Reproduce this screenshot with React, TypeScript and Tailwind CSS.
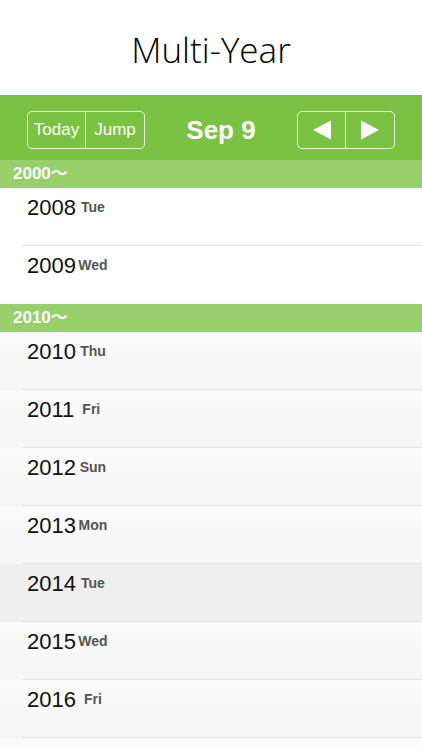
import React from "react";

type Row = { year: number; day: string; active?: boolean };

const sections: { label: string; rows: Row[]; tinted?: boolean }[] = [
  {
    label: "2000〜",
    rows: [
      { year: 2008, day: "Tue" },
      { year: 2009, day: "Wed" },
    ],
  },
  {
    label: "2010〜",
    tinted: true,
    rows: [
      { year: 2010, day: "Thu" },
      { year: 2011, day: "Fri" },
      { year: 2012, day: "Sun" },
      { year: 2013, day: "Mon" },
      { year: 2014, day: "Tue", active: true },
      { year: 2015, day: "Wed" },
      { year: 2016, day: "Fri" },
      { year: 2017, day: "Sat" },
    ],
  },
];

const sans = { fontFamily: '"Liberation Sans", Arial, "Noto Sans CJK JP", sans-serif' };

const YearRow = ({ row, last, tinted }: { row: Row; last: boolean; tinted?: boolean }) => {
  const bg = row.active
    ? "bg-[#efefef]"
    : tinted
    ? "bg-gradient-to-b from-[#fbfbfb] to-[#f6f6f6]"
    : "bg-white";
  return (
    <div className={`h-[58px] shrink-0 ${bg}`}>
      <div className={`ml-[22px] h-full ${last ? "" : "border-b border-[#e3e3e3]"}`}>
        <div className="flex items-start pl-[5px] pt-[7px]">
          <span className="text-[22px] leading-[26px] text-[#111]">{row.year}</span>
          <span className="ml-[2px] mt-[4px] w-[30px] text-center text-[14px] font-bold leading-[16px] text-[#555]">
            {row.day}
          </span>
        </div>
      </div>
    </div>
  );
};

const Triangle = ({ dir }: { dir: "left" | "right" }) => (
  <svg width="22" height="22" viewBox="0 0 22 22">
    {dir === "left" ? (
      <path d="M2 11 L20 1.5 L20 20.5 Z" fill="white" />
    ) : (
      <path d="M20 11 L2 1.5 L2 20.5 Z" fill="white" />
    )}
  </svg>
);

export default function App() {
  return (
    <div className="h-[750px] w-[422px] overflow-hidden bg-white flex flex-col" style={sans}>
      <div className="flex h-[95px] shrink-0 items-center justify-center pt-[5px]">
        <h1
          className="text-[35px] font-light text-black"
          style={{ fontFamily: '"Open Sans", "Noto Sans", sans-serif' }}
        >
          Multi-Year
        </h1>
      </div>

      <div className="flex h-[65px] shrink-0 items-center justify-between bg-[#7bc143] px-[27px] pt-[5px]">
        <div className="flex h-[38px] w-[118px] rounded-[5px] border-[1.5px] border-[#e9f6df] text-white">
          <button className="flex w-[58px] items-center justify-center border-r-[1.5px] border-[#e9f6df] text-[17px]">
            Today
          </button>
          <button className="flex flex-1 items-center justify-center text-[17px]">Jump</button>
        </div>
        <div className="text-[26px] font-bold text-white">Sep 9</div>
        <div className="flex h-[38px] w-[98px] rounded-[5px] border-[1.5px] border-[#e9f6df]">
          <button className="flex w-[48px] items-center justify-center border-r-[1.5px] border-[#e9f6df]">
            <Triangle dir="left" />
          </button>
          <button className="flex flex-1 items-center justify-center">
            <Triangle dir="right" />
          </button>
        </div>
      </div>

      {sections.map((s) => (
        <div key={s.label} className="flex flex-col">
          <div className="flex h-[28px] shrink-0 items-center bg-[#97d06b] pl-[13px] text-[17px] font-bold text-white">
            {s.label}
          </div>
          {s.rows.map((r, i) => (
            <YearRow key={r.year} row={r} last={i === s.rows.length - 1} tinted={s.tinted} />
          ))}
        </div>
      ))}
    </div>
  );
}
